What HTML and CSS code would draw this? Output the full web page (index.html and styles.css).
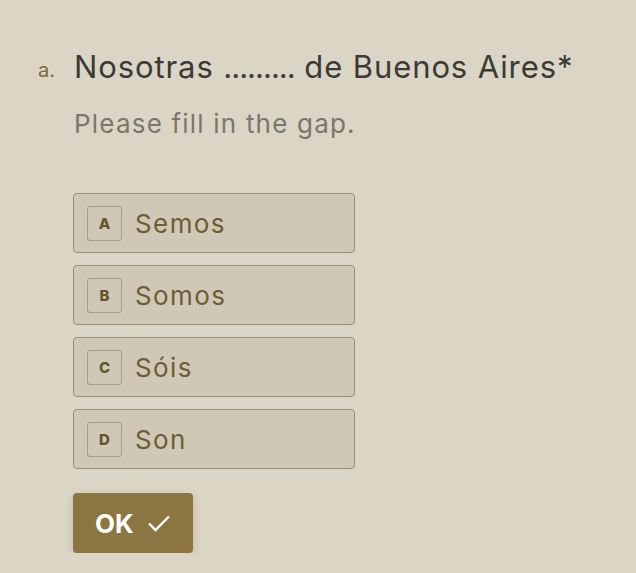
FILE: index.html
```html
<!DOCTYPE html>
<html lang="es">
<head>
    <meta charset="UTF-8">
    <title>Nosotras ......... de Buenos Aires</title>
    <link rel="stylesheet" href="styles.css">
</head>
<body>
    <main class="question">
        <div class="question-head">
            <span class="question-num">a.</span>
            <div class="question-body">
                <h1 class="question-title">Nosotras <span class="gap-dots">.........</span> de Buenos Aires*</h1>
                <p class="question-desc">Please fill in the gap.</p>
            </div>
        </div>
        <ul class="choices">
            <li class="choice"><span class="choice-key">A</span><span class="choice-label">Semos</span></li>
            <li class="choice"><span class="choice-key">B</span><span class="choice-label">Somos</span></li>
            <li class="choice"><span class="choice-key">C</span><span class="choice-label">Sóis</span></li>
            <li class="choice"><span class="choice-key">D</span><span class="choice-label">Son</span></li>
        </ul>
        <button class="ok-button" type="button">OK
            <svg class="ok-check" width="24" height="18" viewBox="0 0 24 18"><path d="M2 9.5 L8.5 16 L22 2.5" fill="none" stroke="#fff" stroke-width="2.4"/></svg>
        </button>
    </main>
</body>
</html>
```

FILE: styles.css
```css
:root {
  font-size: 16px;
}
body {
  margin: 0;
  background: #dbd5c5;
  font-family: Inter, "Liberation Sans", sans-serif;
}
.question {
  padding: 44px 0 0 38px;
}
.question-head {
  display: flex;
}
.question-num {
  width: 36px;
  padding-top: 14px;
  font-size: 20px;
  color: #7a6a3e;
}
.question-title {
  margin: 0;
  font-size: 31px;
  font-weight: 400;
  line-height: 46px;
  letter-spacing: 0.9px;
  color: #3b3a36;
}
.gap-dots {
  letter-spacing: -1px;
}
.question-desc {
  margin: 16px 0 0;
  font-size: 26px;
  line-height: 36px;
  letter-spacing: 1.2px;
  color: #7a766c;
}
.choices {
  list-style: none;
  margin: 51px 0 0 35px;
  padding: 0;
  display: flex;
  flex-direction: column;
  gap: 12px;
}
.choice {
  display: flex;
  align-items: center;
  box-sizing: border-box;
  width: 282px;
  height: 60px;
  padding: 0 13px;
  border: 1px solid #9a8d70;
  border-radius: 4px;
  background: #cfc8b7;
}
.choice-key {
  display: flex;
  align-items: center;
  justify-content: center;
  box-sizing: border-box;
  width: 35px;
  height: 35px;
  margin-right: 13px;
  border: 1px solid #a99d82;
  border-radius: 3px;
  font-size: 15px;
  font-weight: 800;
  color: #65552c;
}
.choice-label {
  font-size: 26px;
  letter-spacing: 1.4px;
  color: #6d5d33;
}
.ok-button {
  display: flex;
  align-items: center;
  gap: 13px;
  margin: 24px 0 0 35px;
  width: 120px;
  height: 60px;
  padding: 0 0 0 22px;
  border: none;
  border-radius: 4px;
  background: #8b7641;
  box-shadow: 0 3px 10px rgba(60, 50, 20, 0.15);
  font-family: Inter, "Liberation Sans", sans-serif;
  font-size: 26px;
  font-weight: 700;
  color: #fff;
}
```
